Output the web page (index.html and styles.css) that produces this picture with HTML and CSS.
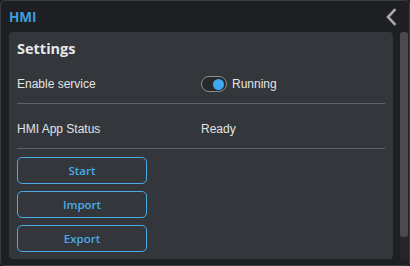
FILE: index.html
```html
<!DOCTYPE html>
<html lang="en">
<head>
	<meta charset="UTF-8">
	<meta name="viewport" content="width=device-width, initial-scale=1.0">
	<title>HMI</title>
	<link rel="stylesheet" href="styles.css">
</head>
<body>
	<div class="window">
		<div class="header">
			<h1 class="title">HMI</h1>
			<svg class="collapse" width="12" height="18" viewBox="0 0 12 18">
				<polyline points="9.5,2 3,9 9.5,16" fill="none" stroke="#a9aaad" stroke-width="2.6" stroke-linecap="square"/>
			</svg>
		</div>

		<div class="body">
			<div class="panel">
				<h2 class="panel-title">Settings</h2>

				<div class="row">
					<div class="label">Enable service</div>
					<div class="value">
						<span class="toggle on"><span class="knob"></span></span>
						<span>Running</span>
					</div>
				</div>

				<div class="row">
					<div class="label">HMI App Status</div>
					<div class="value">Ready</div>
				</div>

				<div class="actions">
					<button>Start</button>
					<button>Import</button>
					<button>Export</button>
				</div>
			</div>

			<div class="scrollbar">
				<div class="thumb"></div>
			</div>
		</div>
	</div>
</body>
</html>
```

FILE: styles.css
```css
* {
	margin: 0;
	padding: 0;
	box-sizing: border-box;
}

html, body {
	width: 410px;
	height: 266px;
	background: #1e1f22;
	overflow: hidden;
}

body {
	font-family: 'Liberation Sans', Arial, sans-serif;
	color: #e4e4e4;
}

.window {
	height: 266px;
	border: 1px solid #3a3b3f;
	border-radius: 5px;
	background: #1e1f22;
	display: flex;
	flex-direction: column;
}

.header {
	height: 31px;
	padding: 0 12px 0 8px;
	display: flex;
	align-items: center;
	justify-content: space-between;
}

.title {
	font-family: 'Open Sans', sans-serif;
	font-size: 13.5px;
	font-weight: 700;
	color: #3c9fdf;
	line-height: 20px;
	margin-top: 1px;
}

.collapse {
	display: block;
	margin-top: 1px;
}

.body {
	flex: 1;
	display: flex;
	gap: 7px;
	padding-left: 8px;
	padding-right: 1px;
}

.panel {
	width: 384px;
	height: 227px;
	background: #33363b;
	border-radius: 4px;
	padding: 6px 8px 6px 8px;
}

.panel-title {
	font-family: 'Open Sans', sans-serif;
	font-size: 14.5px;
	font-weight: 700;
	line-height: 21px;
	color: #e8e8e8;
}

.row {
	display: flex;
	align-items: center;
	height: 45px;
	padding: 17px 0 11px;
	border-bottom: 1px solid #606267;
	font-size: 12px;
	line-height: 16px;
}

.label {
	width: 184px;
}

.value {
	display: flex;
	align-items: center;
	gap: 5px;
}

.toggle {
	width: 26px;
	height: 16px;
	border: 1.5px solid #8c8d91;
	border-radius: 8px;
	background: #27292d;
	display: flex;
	align-items: center;
	justify-content: flex-end;
	padding-right: 2px;
}

.knob {
	width: 11px;
	height: 11px;
	border-radius: 50%;
	background: #3fa9ef;
}

.actions {
	display: flex;
	flex-direction: column;
	gap: 7px;
	margin-top: 8px;
}

button {
	width: 130px;
	height: 27px;
	background: transparent;
	border: 1px solid #4aaae6;
	border-radius: 5px;
	color: #4aaae6;
	font-family: 'Open Sans', sans-serif;
	font-size: 11.5px;
	font-weight: 600;
	cursor: pointer;
}

.scrollbar {
	width: 8px;
	height: 228px;
	background: #25262a;
	border-radius: 3px;
}

.thumb {
	height: 205px;
	background: #4a4b4f;
	border-radius: 3px;
}
```
